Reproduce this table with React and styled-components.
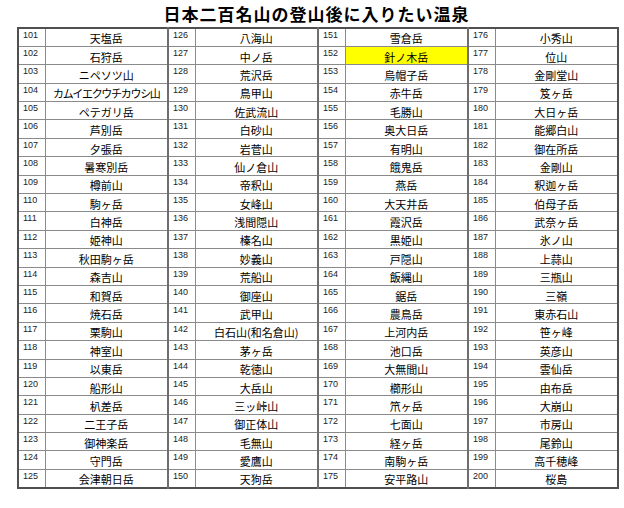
import React from "react"
import styled, { createGlobalStyle } from "styled-components"

const GlobalStyle = createGlobalStyle`
  html, body {
    margin: 0;
    padding: 0;
    background: #ffffff;
  }
  body {
    font-family: "Noto Sans CJK JP", "Liberation Sans", sans-serif;
    color: #000;
  }
`

const columns = [
  [
    "天塩岳", "石狩岳", "ニペソツ山", "カムイエクウチカウシ山", "ペテガリ岳",
    "芦別岳", "夕張岳", "暑寒別岳", "樽前山", "駒ヶ岳",
    "白神岳", "姫神山", "秋田駒ヶ岳", "森吉山", "和賀岳",
    "焼石岳", "栗駒山", "神室山", "以東岳", "船形山",
    "朳差岳", "二王子岳", "御神楽岳", "守門岳", "会津朝日岳",
  ],
  [
    "八海山", "中ノ岳", "荒沢岳", "鳥甲山", "佐武流山",
    "白砂山", "岩菅山", "仙ノ倉山", "帝釈山", "女峰山",
    "浅間隠山", "榛名山", "妙義山", "荒船山", "御座山",
    "武甲山", "白石山(和名倉山)", "茅ヶ岳", "乾徳山", "大岳山",
    "三ッ峠山", "御正体山", "毛無山", "愛鷹山", "天狗岳",
  ],
  [
    "雪倉岳", "針ノ木岳", "烏帽子岳", "赤牛岳", "毛勝山",
    "奥大日岳", "有明山", "餓鬼岳", "燕岳", "大天井岳",
    "霞沢岳", "黒姫山", "戸隠山", "飯縄山", "鋸岳",
    "農鳥岳", "上河内岳", "池口岳", "大無間山", "櫛形山",
    "笊ヶ岳", "七面山", "経ヶ岳", "南駒ヶ岳", "安平路山",
  ],
  [
    "小秀山", "位山", "金剛堂山", "笈ヶ岳", "大日ヶ岳",
    "能郷白山", "御在所岳", "金剛山", "釈迦ヶ岳", "伯母子岳",
    "武奈ヶ岳", "氷ノ山", "上蒜山", "三瓶山", "三嶺",
    "東赤石山", "笹ヶ峰", "英彦山", "雲仙岳", "由布岳",
    "大崩山", "市房山", "尾鈴山", "高千穂峰", "桜島",
  ],
]

const highlighted = [152]

const App = () => {
  const rows = columns[0].map((_, i) => i)

  return (
    <>
      <GlobalStyle />
      <Page>
        <Title>日本二百名山の登山後に入りたい温泉</Title>
        <Sheet>
          <colgroup>
            {columns.map((_, c) => (
              <React.Fragment key={c}>
                <col style={{ width: 27 }} />
                <col style={{ width: 123 }} />
              </React.Fragment>
            ))}
          </colgroup>
          <tbody>
            {rows.map(r => (
              <Row key={r}>
                {columns.map((col, c) => {
                  const num = 101 + c * 25 + r
                  const name = col[r]
                  return (
                    <React.Fragment key={c}>
                      <NumCell>{num}</NumCell>
                      <NameCell
                        marked={highlighted.includes(num)}
                        last={c === columns.length - 1}
                        tight={name.length > 9}
                      >
                        {name}
                      </NameCell>
                    </React.Fragment>
                  )
                })}
              </Row>
            ))}
          </tbody>
        </Sheet>
      </Page>
    </>
  )
}

const Page = styled.div`
  width: 624px;
  padding: 0 8px 0 17px;
  box-sizing: border-box;
`

const Title = styled.h1`
  margin: 0;
  height: 27px;
  display: flex;
  align-items: center;
  justify-content: center;
  font-size: 17px;
  font-weight: 700;
  letter-spacing: 1px;
  line-height: 1;
`

const Sheet = styled.table`
  width: 599px;
  table-layout: fixed;
  border-collapse: collapse;
  border: 2px solid #505050;
`

const Row = styled.tr`
  height: 18.4px;
`

const NumCell = styled.td`
  padding: 1px 0 0 4px;
  vertical-align: top;
  font-family: "Liberation Sans", Arial, sans-serif;
  font-size: 9px;
  line-height: 10px;
  color: #222;
  border-top: 1px solid #8a8a8a;
  border-bottom: 1px solid #8a8a8a;
  border-right: 1px solid #8a8a8a;
  white-space: nowrap;
  overflow: hidden;
`

const NameCell = styled.td`
  padding: 2px 0 0 0;
  text-align: center;
  vertical-align: middle;
  font-size: 11px;
  line-height: 14px;
  letter-spacing: ${({ tight }) => (tight ? "-1.3px" : "0")};
  white-space: nowrap;
  overflow: hidden;
  background: ${({ marked }) => (marked ? "#ffff00" : "transparent")};
  border-top: 1px solid #8a8a8a;
  border-bottom: 1px solid #8a8a8a;
  border-right: ${({ last }) => (last ? "2px solid #505050" : "2px solid #6e6e6e")};
`

export default App
